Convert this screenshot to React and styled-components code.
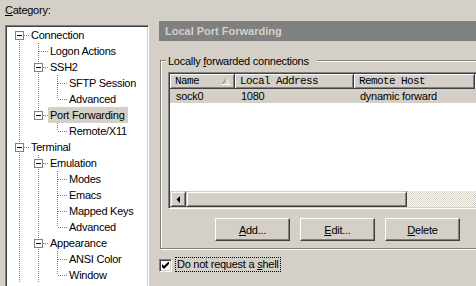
import React from 'react';
import styled, { createGlobalStyle } from 'styled-components';

const GlobalStyle = createGlobalStyle`
  html, body {
    margin: 0;
    padding: 0;
    background: #d4d0c8;
  }
  body {
    font-family: Tahoma, "Liberation Sans", Arial, sans-serif;
    font-size: 11px;
    letter-spacing: -0.25px;
    color: #000;
  }
`;

const Window = styled.div`
  width: 476px;
  height: 286px;
  overflow: hidden;
  display: flex;
  align-items: flex-start;
`;

const LeftPane = styled.div`
  width: 144px;
  margin-left: 5px;
  flex-shrink: 0;
  display: flex;
  flex-direction: column;
`;

const CategoryLabel = styled.div`
  height: 25px;
  box-sizing: border-box;
  padding-top: 4px;
  line-height: 13px;
`;

const TreeBox = styled.div`
  height: 300px;
  box-sizing: border-box;
  background: #fff;
  border: 1px solid;
  border-color: #808080 #fff #fff #808080;
  box-shadow: inset 1px 1px #404040, inset -1px -1px #d4d0c8;
  padding: 1px 0 0 4px;
`;

const TreeRow = styled.div`
  display: flex;
  align-items: center;
  height: 16px;
  white-space: nowrap;
`;

const TreeText = styled.span`
  line-height: 16px;
  padding: 0 3px 0 2px;
  background: ${p => (p.selected ? '#d4d0c8' : 'transparent')};
`;

const RightPane = styled.div`
  width: 340px;
  margin-left: 10px;
  flex-shrink: 0;
  padding-top: 21px;
`;

const HeaderBar = styled.div`
  height: 20px;
  line-height: 20px;
  padding-left: 6px;
  background: #808080;
  color: #d4d0c8;
  font-weight: bold;
  letter-spacing: 0;
`;

const Group = styled.div`
  position: relative;
  margin: 19px 0 0 1px;
  border: 1px solid #808080;
  box-shadow: inset 1px 1px #fff, 1px 1px #fff;
  padding: 11px 0 7px 7px;
`;

const Legend = styled.span`
  position: absolute;
  top: -7px;
  left: 5px;
  padding: 0 8px 0 2px;
  line-height: 14px;
  background: #d4d0c8;
`;

const ListView = styled.div`
  width: 320px;
  height: 137px;
  box-sizing: border-box;
  display: flex;
  flex-direction: column;
  background: #fff;
  border: 1px solid;
  border-color: #808080 #fff #fff #808080;
  box-shadow: inset 1px 1px #404040, inset -1px -1px #d4d0c8;
  padding: 1px;
`;

const ListHeader = styled.div`
  display: flex;
  height: 15px;
  flex-shrink: 0;
`;

const HeaderCell = styled.div`
  width: ${p => p.w}px;
  flex-shrink: 0;
  box-sizing: border-box;
  display: flex;
  align-items: center;
  justify-content: space-between;
  padding: 0 4px 0 5px;
  background: #d4d0c8;
  border-right: 1px solid #404040;
  border-bottom: 1px solid #404040;
  box-shadow: inset 1px 1px #fff, inset -1px -1px #808080;
  font-family: "Liberation Mono", "DejaVu Sans Mono", monospace;
  font-size: 11px;
  letter-spacing: -0.6px;
  line-height: 14px;
`;

const ListRow = styled.div`
  display: flex;
  height: 14px;
  flex-shrink: 0;
  background: ${p => (p.selected ? '#d4d0c8' : '#fff')};
`;

const ListCell = styled.div`
  width: ${p => p.w}px;
  flex-shrink: 0;
  box-sizing: border-box;
  padding-left: 6px;
  line-height: 14px;
  white-space: nowrap;
`;

const ListSpacer = styled.div`
  flex: 1;
`;

const ScrollBar = styled.div`
  display: flex;
  height: 16px;
  flex-shrink: 0;
`;

const Raised = styled.div`
  box-sizing: border-box;
  height: 16px;
  width: ${p => p.w}px;
  flex-shrink: 0;
  display: flex;
  align-items: center;
  justify-content: center;
  background: #d4d0c8;
  border: 1px solid;
  border-color: #d4d0c8 #404040 #404040 #d4d0c8;
  box-shadow: inset 1px 1px #fff, inset -1px -1px #808080;
`;

const Track = styled.div`
  flex: 1;
  background: repeating-conic-gradient(#fff 0 25%, #d4d0c8 0 50%) 0 0 / 2px 2px;
`;

const ButtonRow = styled.div`
  display: flex;
  gap: 10px;
  margin-top: 9px;
  padding-left: 47px;
`;

const PushButton = styled.div`
  width: 75px;
  height: 23px;
  box-sizing: border-box;
  display: flex;
  align-items: center;
  justify-content: center;
  background: #d4d0c8;
  border: 1px solid;
  border-color: #fff #404040 #404040 #fff;
  box-shadow: inset -1px -1px #808080;
`;

const CheckRow = styled.div`
  display: flex;
  align-items: flex-start;
  margin-top: 8px;
`;

const CheckBox = styled.div`
  width: 13px;
  height: 13px;
  margin-top: 2px;
  box-sizing: border-box;
  display: flex;
  align-items: center;
  justify-content: center;
  background: #fff;
  border: 1px solid;
  border-color: #808080 #fff #fff #808080;
  box-shadow: inset 1px 1px #404040, inset -1px -1px #d4d0c8;
`;

const CheckLabel = styled.span`
  margin-left: 3px;
  padding: 0 1px;
  line-height: 13px;
  border: 1px dotted #000;
`;

// connector cell for the tree: 'pass' = ancestor line, 'tee'/'end' = own elbow
const TreeCell = ({ mode, first, box }) => {
  const dot = { stroke: '#808080', strokeDasharray: '1 1', shapeRendering: 'crispEdges' };
  return (
    <svg width="19" height="16" style={{ flexShrink: 0, display: 'block' }}>
      {mode === 'pass' && <line x1="9.5" y1="0" x2="9.5" y2="16" {...dot} />}
      {(mode === 'tee' || mode === 'end') && (
        <>
          {!first && <line x1="9.5" y1="0" x2="9.5" y2="8" {...dot} />}
          {mode === 'tee' && <line x1="9.5" y1="8" x2="9.5" y2="16" {...dot} />}
          <line x1="10" y1="8.5" x2="19" y2="8.5" {...dot} />
        </>
      )}
      {box && (
        <>
          <rect x="5.5" y="4.5" width="8" height="8" fill="#fff" stroke="#808080" shapeRendering="crispEdges" />
          <line x1="7" y1="8.5" x2="12" y2="8.5" stroke="#000" shapeRendering="crispEdges" />
        </>
      )}
    </svg>
  );
};

const tree = [
  { label: 'Connection', lines: [], own: 'tee', box: true, first: true },
  { label: 'Logon Actions', lines: [true], own: 'tee' },
  { label: 'SSH2', lines: [true], own: 'tee', box: true },
  { label: 'SFTP Session', lines: [true, true], own: 'tee' },
  { label: 'Advanced', lines: [true, true], own: 'end' },
  { label: 'Port Forwarding', lines: [true], own: 'end', box: true, selected: true },
  { label: 'Remote/X11', lines: [true, false], own: 'end' },
  { label: 'Terminal', lines: [], own: 'tee', box: true },
  { label: 'Emulation', lines: [true], own: 'tee', box: true },
  { label: 'Modes', lines: [true, true], own: 'tee' },
  { label: 'Emacs', lines: [true, true], own: 'tee' },
  { label: 'Mapped Keys', lines: [true, true], own: 'tee' },
  { label: 'Advanced', lines: [true, true], own: 'end' },
  { label: 'Appearance', lines: [true], own: 'tee', box: true },
  { label: 'ANSI Color', lines: [true, true], own: 'tee' },
  { label: 'Window', lines: [true, true], own: 'end' },
];

const columns = [
  { title: 'Name', w: 65, sort: true },
  { title: 'Local Address', w: 119 },
  { title: 'Remote Host', w: 121 },
];

const SortArrow = () => (
  <svg width="8" height="7" style={{ display: 'block' }}>
    <line x1="0.5" y1="6.5" x2="4" y2="0.5" stroke="#808080" />
    <line x1="4" y1="0.5" x2="7.5" y2="6.5" stroke="#fff" />
    <line x1="0" y1="6.5" x2="8" y2="6.5" stroke="#fff" shapeRendering="crispEdges" />
  </svg>
);

export default function App() {
  return (
    <Window>
      <GlobalStyle />
      <LeftPane>
        <CategoryLabel><u>C</u>ategory:</CategoryLabel>
        <TreeBox>
          {tree.map((n, i) => (
            <TreeRow key={i}>
              {n.lines.map((on, j) => (
                <TreeCell key={j} mode={on ? 'pass' : 'none'} />
              ))}
              <TreeCell mode={n.own} first={n.first} box={n.box} />
              <TreeText selected={n.selected}>{n.label}</TreeText>
            </TreeRow>
          ))}
        </TreeBox>
      </LeftPane>

      <RightPane>
        <HeaderBar>Local Port Forwarding</HeaderBar>
        <Group>
          <Legend>Locally <u>f</u>orwarded connections</Legend>
          <ListView>
            <ListHeader>
              {columns.map(c => (
                <HeaderCell key={c.title} w={c.w}>
                  <span>{c.title}</span>
                  {c.sort && <SortArrow />}
                </HeaderCell>
              ))}
            </ListHeader>
            <ListRow selected>
              <ListCell w={65}>sock0</ListCell>
              <ListCell w={119}>1080</ListCell>
              <ListCell w={121}>dynamic forward</ListCell>
            </ListRow>
            <ListSpacer />
            <ScrollBar>
              <Raised w={16}>
                <svg width="4" height="7" style={{ display: 'block' }}>
                  <polygon points="4,0 4,7 0.5,3.5" fill="#000" />
                </svg>
              </Raised>
              <Raised w={221} />
              <Track />
            </ScrollBar>
          </ListView>
          <ButtonRow>
            <PushButton><span><u>A</u>dd...</span></PushButton>
            <PushButton><span><u>E</u>dit...</span></PushButton>
            <PushButton><span><u>D</u>elete</span></PushButton>
          </ButtonRow>
        </Group>
        <CheckRow>
          <CheckBox>
            <svg width="7" height="7" style={{ display: 'block' }}>
              <polygon points="0,2 2,4 7,-1 7,2 2,7 0,5" fill="#000" />
            </svg>
          </CheckBox>
          <CheckLabel>Do not request a <u>s</u>hell</CheckLabel>
        </CheckRow>
      </RightPane>
    </Window>
  );
}
